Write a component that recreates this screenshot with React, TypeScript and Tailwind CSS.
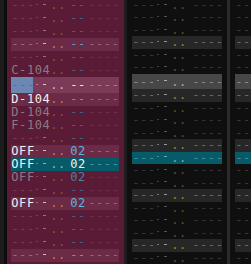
type Kind = 'n' | 'h' | 'c' | 'p';

interface Row {
  kind: Kind;
  note?: string;
  vol?: string;
}

const rows: Row[] = [
  { kind: 'n' },
  { kind: 'n' },
  { kind: 'n' },
  { kind: 'h' },
  { kind: 'n' },
  { kind: 'n', note: 'C-104' },
  { kind: 'c' },
  { kind: 'h', note: 'D-104' },
  { kind: 'n', note: 'D-104' },
  { kind: 'n', note: 'F-104' },
  { kind: 'n' },
  { kind: 'h', note: 'OFF', vol: '02' },
  { kind: 'p', note: 'OFF', vol: '02' },
  { kind: 'n', note: 'OFF', vol: '02' },
  { kind: 'n' },
  { kind: 'h', note: 'OFF', vol: '02' },
  { kind: 'n' },
  { kind: 'n' },
  { kind: 'n' },
  { kind: 'h' },
  { kind: 'n' },
];

// pink (selected) channel
const pink = {
  n: { bg: 'bg-[#5a1b36]', dash: 'text-[#7a3957]', m1: 'bg-[#83405f]', m2: 'bg-[#a36a84]', dot: 'text-[#94522a]', inst: 'text-[#3f6488]', fx: 'text-[#72304f]', note: 'text-[#8e7884]', val: 'text-[#4d80a3]' },
  h: { bg: 'bg-[#6b2a46]', dash: 'text-[#9c6580]', m1: 'bg-[#a06a84]', m2: 'bg-[#d6b8c6]', dot: 'text-[#c57c35]', inst: 'text-[#5e98c4]', fx: 'text-[#9c6580]', note: 'text-[#f3eef0]', val: 'text-[#5cb2e4]' },
  c: { bg: 'bg-[#7b3a58]', dash: 'text-[#b5798f]', m1: 'bg-[#b5798f]', m2: 'bg-[#e0c4d0]', dot: 'text-[#d8b0c0]', inst: 'text-[#f5e6ee]', fx: 'text-[#b5798f]', note: 'text-[#f3eef0]', val: 'text-[#f5e6ee]' },
  p: { bg: 'bg-[#075b69]', dash: 'text-[#3f96a3]', m1: 'bg-[#3f96a3]', m2: 'bg-[#7fb7bf]', dot: 'text-[#7fb7bf]', inst: 'text-[#6ab0c8]', fx: 'text-[#3f96a3]', note: 'text-[#eef6f6]', val: 'text-[#e6f4f6]' },
};

// other channels
const gray = {
  n: { bg: 'bg-[#0f0f0f]', dash: 'text-[#383838]', m1: 'bg-[#424242]', m2: 'bg-[#525252]', dot: 'text-[#55551f]', fx: 'text-[#343434]' },
  h: { bg: 'bg-[#272727]', dash: 'text-[#686868]', m1: 'bg-[#757575]', m2: 'bg-[#999999]', dot: 'text-[#8c8c2c]', fx: 'text-[#686868]' },
  c: { bg: 'bg-[#474747]', dash: 'text-[#8a8a8a]', m1: 'bg-[#8a8a8a]', m2: 'bg-[#b0b0b0]', dot: 'text-[#a8a8a8]', fx: 'text-[#8a8a8a]' },
  p: { bg: 'bg-[#075b69]', dash: 'text-[#3f8e99]', m1: 'bg-[#3f8e99]', m2: 'bg-[#6fa8b0]', dot: 'text-[#7aaab0]', fx: 'text-[#3f8e99]' },
};

// one character cell is 7.8px wide (12px DejaVu Sans Mono + 0.58px tracking)
const W: Record<number, string> = { 2: 'w-[15.6px]', 3: 'w-[23.4px]', 4: 'w-[31.2px]', 5: 'w-[39px]' };

function Txt({ text, color }: { text: string; color: string }) {
  return (
    <span className={`${W[text.length]} shrink-0 whitespace-pre pl-[0.3px] tracking-[0.58px] ${color}`}>
      {text}
    </span>
  );
}

// the two small placeholder ticks of an empty instrument slot
function Marks({ m1, m2 }: { m1: string; m2: string }) {
  return (
    <span className="flex w-[15.6px] shrink-0 items-center -translate-y-px">
      <span className={`ml-[1.6px] h-px w-[2px] ${m1}`} />
      <span className={`ml-[4.6px] h-px w-[3px] ${m2}`} />
    </span>
  );
}

function PinkRow({ row }: { row: Row }) {
  const c = pink[row.kind];
  const h = row.kind === 'c' ? 'h-[16px] leading-[16px]' : 'h-[13px] leading-[13px]';
  return (
    <div className={`flex w-[108px] ${h} ${c.bg}`}>
      {row.note === 'OFF' ? (
        <>
          <Txt text="OFF" color={c.note} />
          <Marks m1={c.m1} m2={c.m2} />
        </>
      ) : row.note ? (
        <Txt text={row.note} color={c.note} />
      ) : row.kind === 'c' ? (
        <>
          <span className="flex w-[22px] shrink-0 bg-[#6d87b3]">
            <Txt text="---" color="text-[#54709f]" />
          </span>
          <span className="w-[1.4px] shrink-0" />
          <Marks m1={c.m1} m2={c.m2} />
        </>
      ) : (
        <>
          <Txt text="---" color={c.dash} />
          <Marks m1={c.m1} m2={c.m2} />
        </>
      )}
      <Txt text=".." color={c.dot} />
      <span className="w-[4.4px] shrink-0" />
      <Txt text={row.vol ?? '--'} color={row.vol ? c.val : c.inst} />
      <span className="w-[2.4px] shrink-0" />
      <Txt text="----" color={c.fx} />
    </div>
  );
}

function GrayRow({ row }: { row: Row }) {
  const c = gray[row.kind];
  const h = row.kind === 'c' ? 'h-[16px] leading-[16px]' : 'h-[13px] leading-[13px]';
  return (
    <div className={`flex w-[90px] overflow-hidden ${h} ${c.bg}`}>
      <Txt text="---" color={c.dash} />
      <Marks m1={c.m1} m2={c.m2} />
      <Txt text=".." color={c.dot} />
      <span className="w-[5.4px] shrink-0" />
      <Txt text="----" color={c.fx} />
    </div>
  );
}

export default function App() {
  return (
    <div className="flex h-[264px] w-[251px] overflow-hidden bg-[#0f0f0f] font-['DejaVu_Sans_Mono',monospace] text-[12px]">
      <div className="w-[4px] shrink-0 bg-[#1c1c1c]" />
      <div className="w-[3px] shrink-0 bg-[#0d0d0d]" />
      <div className="flex w-[117px] shrink-0 flex-col bg-[#5a1b36] pl-[4px] -mt-px">
        {rows.map((r, i) => (
          <PinkRow key={i} row={r} />
        ))}
      </div>
      <div className="w-[3px] shrink-0 bg-[#1d1d1d]" />
      <div className="flex w-[100px] shrink-0 flex-col pl-[5px] -mt-px">
        {rows.map((r, i) => (
          <GrayRow key={i} row={r} />
        ))}
      </div>
      <div className="w-[3px] shrink-0 bg-[#2b2b2b]" />
      <div className="flex shrink-0 flex-col pl-[5px] -mt-px">
        {rows.map((r, i) => (
          <GrayRow key={i} row={r} />
        ))}
      </div>
    </div>
  );
}
